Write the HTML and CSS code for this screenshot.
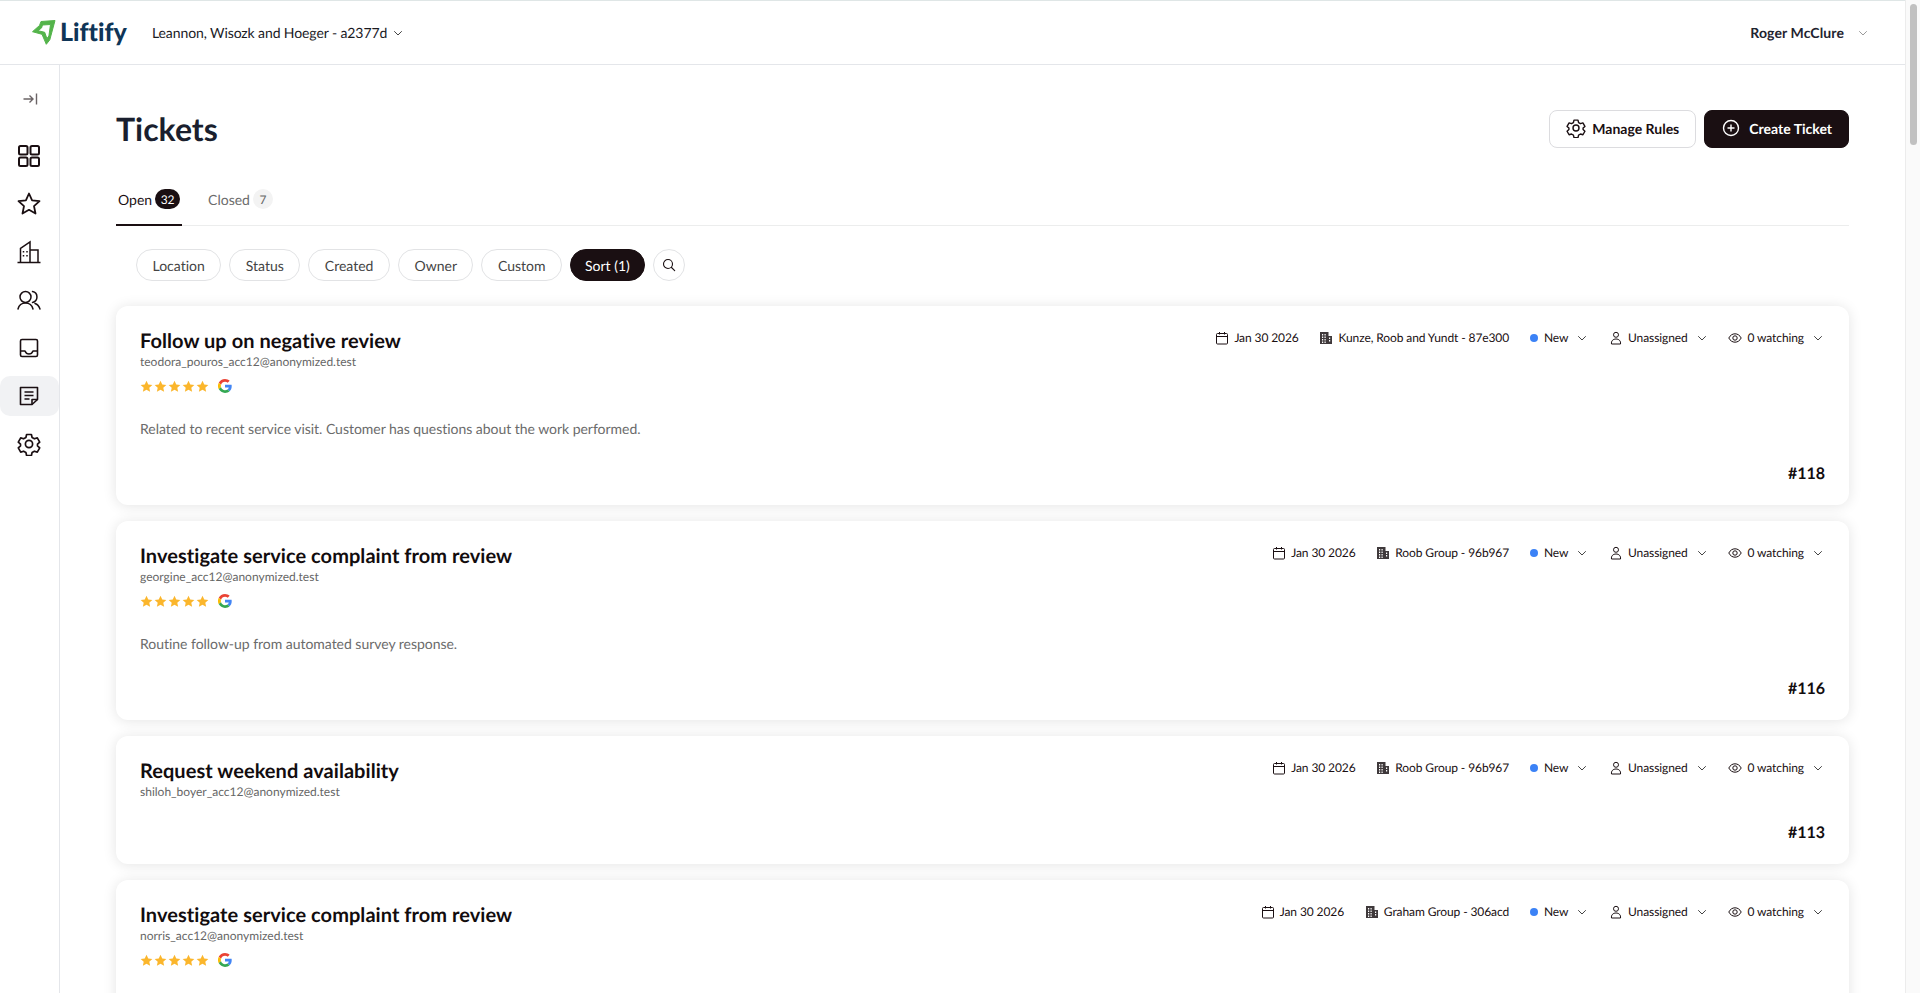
FILE: index.html
```html
<!DOCTYPE html>
<html lang="en">
<head>
  <meta charset="UTF-8" />
  <meta name="viewport" content="width=device-width, initial-scale=1" />
  <title>Tickets</title>
  <link rel="stylesheet" href="styles.css">
</head>
<body>
  <svg class="sprite" width="0" height="0">
    <defs>
      <symbol id="i-chevron" viewBox="0 0 12 12"><path d="M2.500 4.500 6 8l3.500-3.500" fill="none" stroke="currentColor" stroke-linecap="round" stroke-linejoin="round"/></symbol>
      <symbol id="i-gear" viewBox="0 0 24 24"><g fill="none" stroke="currentColor" stroke-width="1.700" stroke-linejoin="round"><path d="M9.600 2.500h4.800l.7 3 2.300 1.300 2.900-.9 2.400 4.200-2.200 2 0 .9 0 .9 2.200 2-2.400 4.200-2.900-.9-2.300 1.300-.7 3H9.600l-.7-3-2.300-1.300-2.900.9-2.400-4.200 2.200-2v-1.800l-2.200-2 2.400-4.200 2.900.9 2.300-1.300z"/><circle cx="12" cy="12" r="3.600"/></g></symbol>
      <symbol id="i-calendar" viewBox="0 0 14 14"><g fill="none" stroke="currentColor"><rect x="1.500" y="2.500" width="11" height="10.500" rx="1"/><path d="M1.500 5.500h11M4.500 1v2.500M9.500 1v2.500"/></g></symbol>
      <symbol id="i-office" viewBox="0 0 14 14"><path fill="#3f393b" fill-rule="evenodd" d="M1 1h8.500v4H13v8H1zm2 2v1.500h1.200V3zm2.500 0v1.500h1.200V3zM3 5.500V7h1.200V5.500zm2.500 0V7h1.200V5.500zM3 8v1.500h1.200V8zm2.500 0v1.500h1.200V8zM10 6.500V8h1.200V6.500zM10 9v1.500h1.200V9zM3 10.500V12h1.200v-1.500zm2.500 0V12h1.200v-1.500z"/></symbol>
      <symbol id="i-user" viewBox="0 0 14 14"><g fill="none" stroke="currentColor"><circle cx="7" cy="3.800" r="2.500"/><path d="M2.500 13c-.5-3 1.500-5 4.500-5s5 2 4.500 5z" stroke-linejoin="round"/></g></symbol>
      <symbol id="i-eye" viewBox="0 0 14 14"><g fill="none" stroke="currentColor"><path d="M.8 7C2.200 4.300 4.400 2.800 7 2.800s4.800 1.500 6.200 4.200c-1.400 2.700-3.600 4.200-6.200 4.200S2.200 9.700.8 7z"/><circle cx="7" cy="7" r="2.200"/></g></symbol>
      <symbol id="i-star" viewBox="0 0 14 14"><path fill="#fbb62c" d="m7 .8 1.900 4 4.400.5-3.300 3 .9 4.400L7 10.500l-3.900 2.200.9-4.400-3.300-3 4.400-.5z"/></symbol>
      <symbol id="i-google" viewBox="0 0 48 48">
        <path fill="#ea4335" d="M24 9.500c3.500 0 6.700 1.300 9.200 3.400l6.800-6.800C35.900 2.400 30.300 0 24 0 14.600 0 6.500 5.400 2.600 13.200l7.900 6.200C12.400 13.700 17.700 9.500 24 9.500z"/>
        <path fill="#4285f4" d="M47 24.500c0-1.600-.2-3.100-.4-4.500H24v9h12.900c-.6 3-2.200 5.400-4.800 7.100l7.700 6C44.300 37.900 47 31.800 47 24.500z"/>
        <path fill="#fbbc05" d="M10.500 28.600a14.500 14.500 0 0 1 0-9.200l-7.900-6.200a24 24 0 0 0 0 21.600z"/>
        <path fill="#34a853" d="M24 48c6.500 0 11.900-2.100 15.800-5.800l-7.700-6c-2.100 1.400-4.900 2.300-8.100 2.300-6.300 0-11.600-4.200-13.500-10l-7.900 6.200C6.500 42.600 14.600 48 24 48z"/>
      </symbol>
    </defs>
  </svg>

  <div class="app">
    <header class="topbar">
      <div class="brand">
        <svg class="brand-mark" viewBox="0 0 24 26"><path fill="#54b44b" fill-rule="evenodd" stroke="#54b44b" stroke-linejoin="round" d="M23 .5 9 1.500 7.500 5.500.5 11.700 10 14.300l4.300 10 3.500-4.500zM18.500 4.500 10.500 5l-1 3-3.500 2.700 6.700 1.600 2.200 6.200 2-2.500z"/></svg>
        <span class="brand-name">Liftify</span>
      </div>
      <button class="company-select">Leannon, Wisozk and Hoeger - a2377d <svg class="chevron"><use href="#i-chevron"/></svg></button>
      <div class="user-menu">Roger McClure <svg class="chevron muted"><use href="#i-chevron"/></svg></div>
    </header>

    <div class="body-row">
      <nav class="sidebar">
        <a class="collapse">
          <svg viewBox="0 0 16 16" width="16" height="16"><path d="M1.500 8h9M7.500 4.500 11 8l-3.500 3.500M14.500 2.500v11" fill="none" stroke="#6b6466" stroke-width="1.400"/></svg>
        </a>
        <a class="nav-item">
          <svg viewBox="0 0 24 24"><g fill="none" stroke="currentColor" stroke-width="2"><rect x="2" y="2" width="8.500" height="8.500" rx="1.500"/><rect x="13.500" y="2" width="8.500" height="8.500" rx="1.500"/><rect x="2" y="13.500" width="8.500" height="8.500" rx="1.500"/><rect x="13.500" y="13.500" width="8.500" height="8.500" rx="1.500"/></g></svg>
        </a>
        <a class="nav-item">
          <svg viewBox="0 0 24 24"><path d="m12 1.500 3.100 6.800 7.400.8-5.500 5 1.500 7.400-6.500-3.700-6.500 3.700L7 14.100l-5.500-5 7.400-.8z" fill="none" stroke="currentColor" stroke-width="1.800" stroke-linejoin="round"/></svg>
        </a>
        <a class="nav-item">
          <svg viewBox="0 0 24 24"><g fill="none" stroke="currentColor" stroke-width="1.500"><path d="M.5 22.500h23M3.500 22.500V8.500L13 2v20.500M13 10h8v12.500"/><path d="M6.500 11v1.500M10 11v1.500M6.500 15v1.500M10 15v1.500"/></g></svg>
        </a>
        <a class="nav-item">
          <svg viewBox="0 0 24 24"><g fill="none" stroke="currentColor" stroke-width="1.500" stroke-linecap="round"><circle cx="8.500" cy="9" r="5.500"/><path d="M1 21c1-4 3.500-6 7.500-6s6.500 2 7.500 6M15.500 3.600a5.500 5.500 0 0 1 0 10.800M18 15.500c2.500.8 4 2.600 5 5.500"/></g></svg>
        </a>
        <a class="nav-item">
          <svg viewBox="0 0 24 24"><g fill="none" stroke="currentColor" stroke-width="1.600" stroke-linejoin="round"><rect x="3.500" y="3.500" width="17" height="17" rx="1.500"/><path d="M3.500 15h4.500c1 2.500 2 3 4 3s3-.5 4-3h4.500"/></g></svg>
        </a>
        <a class="nav-item active">
          <svg viewBox="0 0 24 24"><g fill="none" stroke="currentColor" stroke-width="1.600" stroke-linejoin="round"><path d="M3.500 3.500h17v12L15 20.500H3.500z"/><path d="M7.500 8h9M7.500 11.500h9M7.500 15h5M20.500 15.500H15v5"/></g></svg>
        </a>
        <a class="nav-item">
          <svg><use href="#i-gear"/></svg>
        </a>
      </nav>

      <main class="content">
        <div class="page-head">
          <h1>Tickets</h1>
          <div class="page-actions">
            <button class="btn btn-outline"><svg class="btn-icon"><use href="#i-gear"/></svg>Manage Rules</button>
            <button class="btn btn-dark">
              <svg class="btn-icon" viewBox="0 0 20 20"><g fill="none" stroke="currentColor" stroke-width="1.400"><circle cx="10" cy="10" r="7.500"/><path d="M10 6.500v7M6.500 10h7"/></g></svg>
              Create Ticket
            </button>
          </div>
        </div>

        <div class="tabs">
          <a class="tab active">Open <span class="count">32</span></a>
          <a class="tab">Closed <span class="count">7</span></a>
        </div>

        <div class="filters">
          <button class="pill">Location</button>
          <button class="pill">Status</button>
          <button class="pill">Created</button>
          <button class="pill">Owner</button>
          <button class="pill">Custom</button>
          <button class="pill pill-dark">Sort (1)</button>
          <button class="pill pill-search">
            <svg viewBox="0 0 14 14" width="14" height="14"><g fill="none" stroke="currentColor" stroke-width="1.100" stroke-linecap="round"><circle cx="6" cy="6" r="4.500"/><path d="m9.500 9.500 3.200 3.200"/></g></svg>
          </button>
        </div>

        <section class="ticket ticket-tall">
          <div class="ticket-top">
            <div class="ticket-info">
              <h2>Follow up on negative review</h2>
              <div class="ticket-email">teodora_pouros_acc12@anonymized.test</div>
              <div class="rating">
                <svg class="star"><use href="#i-star"/></svg><svg class="star"><use href="#i-star"/></svg><svg class="star"><use href="#i-star"/></svg><svg class="star"><use href="#i-star"/></svg><svg class="star"><use href="#i-star"/></svg>
                <svg class="google"><use href="#i-google"/></svg>
              </div>
            </div>
            <div class="ticket-meta">
              <span class="meta"><svg class="meta-icon"><use href="#i-calendar"/></svg>Jan 30 2026</span>
              <span class="meta"><svg class="meta-icon"><use href="#i-office"/></svg>Kunze, Roob and Yundt - 87e300</span>
              <span class="meta"><i class="dot"></i>New<svg class="chevron"><use href="#i-chevron"/></svg></span>
              <span class="meta"><svg class="meta-icon"><use href="#i-user"/></svg>Unassigned<svg class="chevron"><use href="#i-chevron"/></svg></span>
              <span class="meta"><svg class="meta-icon"><use href="#i-eye"/></svg>0 watching<svg class="chevron"><use href="#i-chevron"/></svg></span>
            </div>
          </div>
          <p class="ticket-desc">Related to recent service visit. Customer has questions about the work performed.</p>
          <div class="ticket-num">#118</div>
        </section>

        <section class="ticket ticket-tall">
          <div class="ticket-top">
            <div class="ticket-info">
              <h2>Investigate service complaint from review</h2>
              <div class="ticket-email">georgine_acc12@anonymized.test</div>
              <div class="rating">
                <svg class="star"><use href="#i-star"/></svg><svg class="star"><use href="#i-star"/></svg><svg class="star"><use href="#i-star"/></svg><svg class="star"><use href="#i-star"/></svg><svg class="star"><use href="#i-star"/></svg>
                <svg class="google"><use href="#i-google"/></svg>
              </div>
            </div>
            <div class="ticket-meta">
              <span class="meta"><svg class="meta-icon"><use href="#i-calendar"/></svg>Jan 30 2026</span>
              <span class="meta"><svg class="meta-icon"><use href="#i-office"/></svg>Roob Group - 96b967</span>
              <span class="meta"><i class="dot"></i>New<svg class="chevron"><use href="#i-chevron"/></svg></span>
              <span class="meta"><svg class="meta-icon"><use href="#i-user"/></svg>Unassigned<svg class="chevron"><use href="#i-chevron"/></svg></span>
              <span class="meta"><svg class="meta-icon"><use href="#i-eye"/></svg>0 watching<svg class="chevron"><use href="#i-chevron"/></svg></span>
            </div>
          </div>
          <p class="ticket-desc">Routine follow-up from automated survey response.</p>
          <div class="ticket-num">#116</div>
        </section>

        <section class="ticket">
          <div class="ticket-top">
            <div class="ticket-info">
              <h2>Request weekend availability</h2>
              <div class="ticket-email">shiloh_boyer_acc12@anonymized.test</div>
            </div>
            <div class="ticket-meta">
              <span class="meta"><svg class="meta-icon"><use href="#i-calendar"/></svg>Jan 30 2026</span>
              <span class="meta"><svg class="meta-icon"><use href="#i-office"/></svg>Roob Group - 96b967</span>
              <span class="meta"><i class="dot"></i>New<svg class="chevron"><use href="#i-chevron"/></svg></span>
              <span class="meta"><svg class="meta-icon"><use href="#i-user"/></svg>Unassigned<svg class="chevron"><use href="#i-chevron"/></svg></span>
              <span class="meta"><svg class="meta-icon"><use href="#i-eye"/></svg>0 watching<svg class="chevron"><use href="#i-chevron"/></svg></span>
            </div>
          </div>
          <div class="ticket-num">#113</div>
        </section>

        <section class="ticket ticket-tall">
          <div class="ticket-top">
            <div class="ticket-info">
              <h2>Investigate service complaint from review</h2>
              <div class="ticket-email">norris_acc12@anonymized.test</div>
              <div class="rating">
                <svg class="star"><use href="#i-star"/></svg><svg class="star"><use href="#i-star"/></svg><svg class="star"><use href="#i-star"/></svg><svg class="star"><use href="#i-star"/></svg><svg class="star"><use href="#i-star"/></svg>
                <svg class="google"><use href="#i-google"/></svg>
              </div>
            </div>
            <div class="ticket-meta">
              <span class="meta"><svg class="meta-icon"><use href="#i-calendar"/></svg>Jan 30 2026</span>
              <span class="meta"><svg class="meta-icon"><use href="#i-office"/></svg>Graham Group - 306acd</span>
              <span class="meta"><i class="dot"></i>New<svg class="chevron"><use href="#i-chevron"/></svg></span>
              <span class="meta"><svg class="meta-icon"><use href="#i-user"/></svg>Unassigned<svg class="chevron"><use href="#i-chevron"/></svg></span>
              <span class="meta"><svg class="meta-icon"><use href="#i-eye"/></svg>0 watching<svg class="chevron"><use href="#i-chevron"/></svg></span>
            </div>
          </div>
        </section>
      </main>
    </div>
  </div>

  <div class="scrollbar"><div class="scrollbar-thumb"></div></div>
</body>
</html>
```

FILE: styles.css
```css
* {
  box-sizing: border-box;
}
html, body {
  height: 100%;
}
body {
  margin: 0;
  display: flex;
  overflow: hidden;
  font-family: Lato, "Open Sans", sans-serif;
  text-rendering: geometricPrecision;
  font-variant-ligatures: none;
  color: #1a0f12;
  background-color: #fff;
}
button {
  font-family: inherit;
  text-rendering: inherit;
  font-variant-ligatures: inherit;
  cursor: pointer;
}
.sprite {
  position: absolute;
}
.app {
  flex: 1;
  min-width: 0;
  height: 100%;
  display: flex;
  flex-direction: column;
  overflow: hidden;
}

/* Top bar */
.topbar {
  flex: none;
  height: 65px;
  display: flex;
  align-items: center;
  padding: 0 32px;
  border-top: 1px solid #dfe6e6;
  border-bottom: 1px solid #e4e6ea;
}
.brand {
  display: flex;
  align-items: center;
  gap: 4px;
  width: 96px;
}
.brand-mark {
  width: 24px;
  height: 26px;
  flex: none;
}
.brand-name {
  font-size: 25px;
  font-weight: 900;
  color: #0f3557;
  line-height: 1;
}
.company-select {
  display: flex;
  align-items: center;
  gap: 5px;
  margin-left: 24px;
  padding: 0;
  border: none;
  background: none;
  font-size: 14px;
  letter-spacing: -0.1px;
  color: #1a1a1f;
}
.chevron {
  width: 12px;
  height: 12px;
  flex: none;
  color: #444;
}
.chevron.muted {
  color: #9a9a9a;
}
.user-menu {
  margin-left: auto;
  margin-right: 4px;
  display: flex;
  align-items: center;
  gap: 13px;
  font-size: 14px;
  font-weight: 700;
  letter-spacing: 0.1px;
  color: #1f2430;
}

/* Sidebar */
.body-row {
  flex: 1;
  min-height: 0;
  display: flex;
}
.sidebar {
  flex: none;
  width: 60px;
  border-right: 1px solid #e4e6ea;
  display: flex;
  flex-direction: column;
  align-items: stretch;
}
.collapse {
  height: 64px;
  margin-top: 2px;
  margin-bottom: 5px;
  padding-left: 22px;
  display: flex;
  align-items: center;
}
.nav-item {
  height: 40px;
  margin-bottom: 8px;
  display: flex;
  align-items: center;
  padding-left: 17px;
  color: #1a0f12;
  border-radius: 10px;
}
.nav-item svg {
  width: 24px;
  height: 24px;
}
.nav-item.active {
  background-color: #f1f2f4;
}

/* Main */
.content {
  flex: 1;
  min-width: 0;
  padding: 45px 56px 0 56px;
}
.page-head {
  display: flex;
  align-items: center;
  justify-content: space-between;
  height: 38px;
}
h1 {
  margin: 0 0 2px 0;
  font-size: 32px;
  font-weight: 700;
  color: #1a1f2e;
}
.page-actions {
  display: flex;
  gap: 8px;
}
.btn {
  height: 38px;
  padding: 0 16px 2px 16px;
  display: flex;
  align-items: center;
  gap: 8px;
  border-radius: 8px;
  font-size: 14px;
  font-weight: 700;
}
.btn-icon {
  width: 20px;
  height: 20px;
}
.btn-outline {
  padding-left: 16px;
  gap: 6px;
  background: #fff;
  border: 1px solid #dcdcdf;
  color: #1a0f12;
}
.btn-dark {
  background-color: #1a0f12;
  border: 1px solid #1a0f12;
  color: #fff;
}

/* Tabs */
.tabs {
  margin-top: 28px;
  height: 50px;
  display: flex;
  gap: 24px;
  border-bottom: 1px solid #eceded;
}
.tab {
  display: flex;
  align-items: center;
  gap: 3px;
  height: 50px;
  padding: 0 2px 4px 2px;
  font-size: 14px;
  color: #6b6b6b;
}
.tab.active {
  padding-bottom: 2px;
  color: #1a0f12;
  border-bottom: 2px solid #1a0f12;
}
.count {
  min-width: 20px;
  height: 20px;
  padding: 0 5.5px;
  border-radius: 10px;
  display: inline-flex;
  align-items: center;
  justify-content: center;
  font-size: 12px;
  background-color: #f3f3f3;
  color: #666;
}
.tab.active .count {
  background-color: #1a0f12;
  color: #fff;
}

/* Filters */
.filters {
  margin-top: 23px;
  margin-bottom: 25px;
  padding-left: 20px;
  display: flex;
  gap: 8px;
}
.pill {
  height: 32px;
  padding: 0 15.5px;
  border: 1px solid #e2e3e5;
  border-radius: 16px;
  background: #fff;
  font-size: 14px;
  color: #444;
}
.pill-dark {
  padding: 0 14px;
  background-color: #1a0f12;
  border-color: #1a0f12;
  color: #fff;
}
.pill-search {
  width: 32px;
  padding: 0;
  display: flex;
  align-items: center;
  justify-content: center;
  color: #1a0f12;
}

/* Ticket cards */
.ticket {
  height: 128px;
  margin-bottom: 16px;
  padding: 24px 24px 22px 24px;
  position: relative;
  background: #fff;
  border-radius: 12px;
  box-shadow: 0 1px 14px rgba(0,0,0,0.11);
  display: flex;
  flex-direction: column;
}
.ticket-tall {
  height: 199px;
}
.ticket-top {
  display: flex;
  justify-content: space-between;
  align-items: flex-start;
}
h2 {
  margin: -1px 0 1px 0;
  font-size: 20px;
  line-height: 24px;
  font-weight: 700;
  letter-spacing: 0.05px;
  color: #120c0e;
}
.ticket-email {
  margin-top: 0;
  font-size: 12px;
  line-height: 16px;
  color: #666;
}
.rating {
  margin-top: 9px;
  display: flex;
  align-items: center;
  gap: 1px;
}
.star {
  width: 13px;
  height: 13px;
}
.google {
  width: 14px;
  height: 14px;
  margin-left: 8px;
}
.ticket-meta {
  display: flex;
  align-items: center;
  gap: 20.8px;
  height: 16px;
  margin-right: 1px;
}
.meta {
  display: flex;
  align-items: center;
  gap: 5px;
  font-size: 12px;
  line-height: 16px;
  letter-spacing: -0.1px;
  color: #1a0f12;
  white-space: nowrap;
}
.meta-icon {
  width: 14px;
  height: 14px;
  flex: none;
}
.meta .chevron {
  margin-left: 3px;
}
.dot {
  width: 8px;
  height: 8px;
  border-radius: 50%;
  background-color: #3b82f6;
  margin-right: 1px;
}
.ticket-desc {
  margin: 26px 0 0 0;
  font-size: 14px;
  line-height: 20px;
  letter-spacing: -0.03px;
  color: #6b6b6b;
}
.ticket-num {
  margin-top: auto;
  text-align: right;
  font-size: 16px;
  font-weight: 700;
  color: #120c0e;
}

/* Scrollbar column */
.scrollbar {
  flex: none;
  width: 15px;
  height: 100%;
  padding: 4px 3px 0 4px;
  background-color: #fafafa;
  border-left: 1px solid #ececec;
}
.scrollbar-thumb {
  height: 141px;
  border-radius: 4px;
  background-color: #c1c1c1;
}
```
